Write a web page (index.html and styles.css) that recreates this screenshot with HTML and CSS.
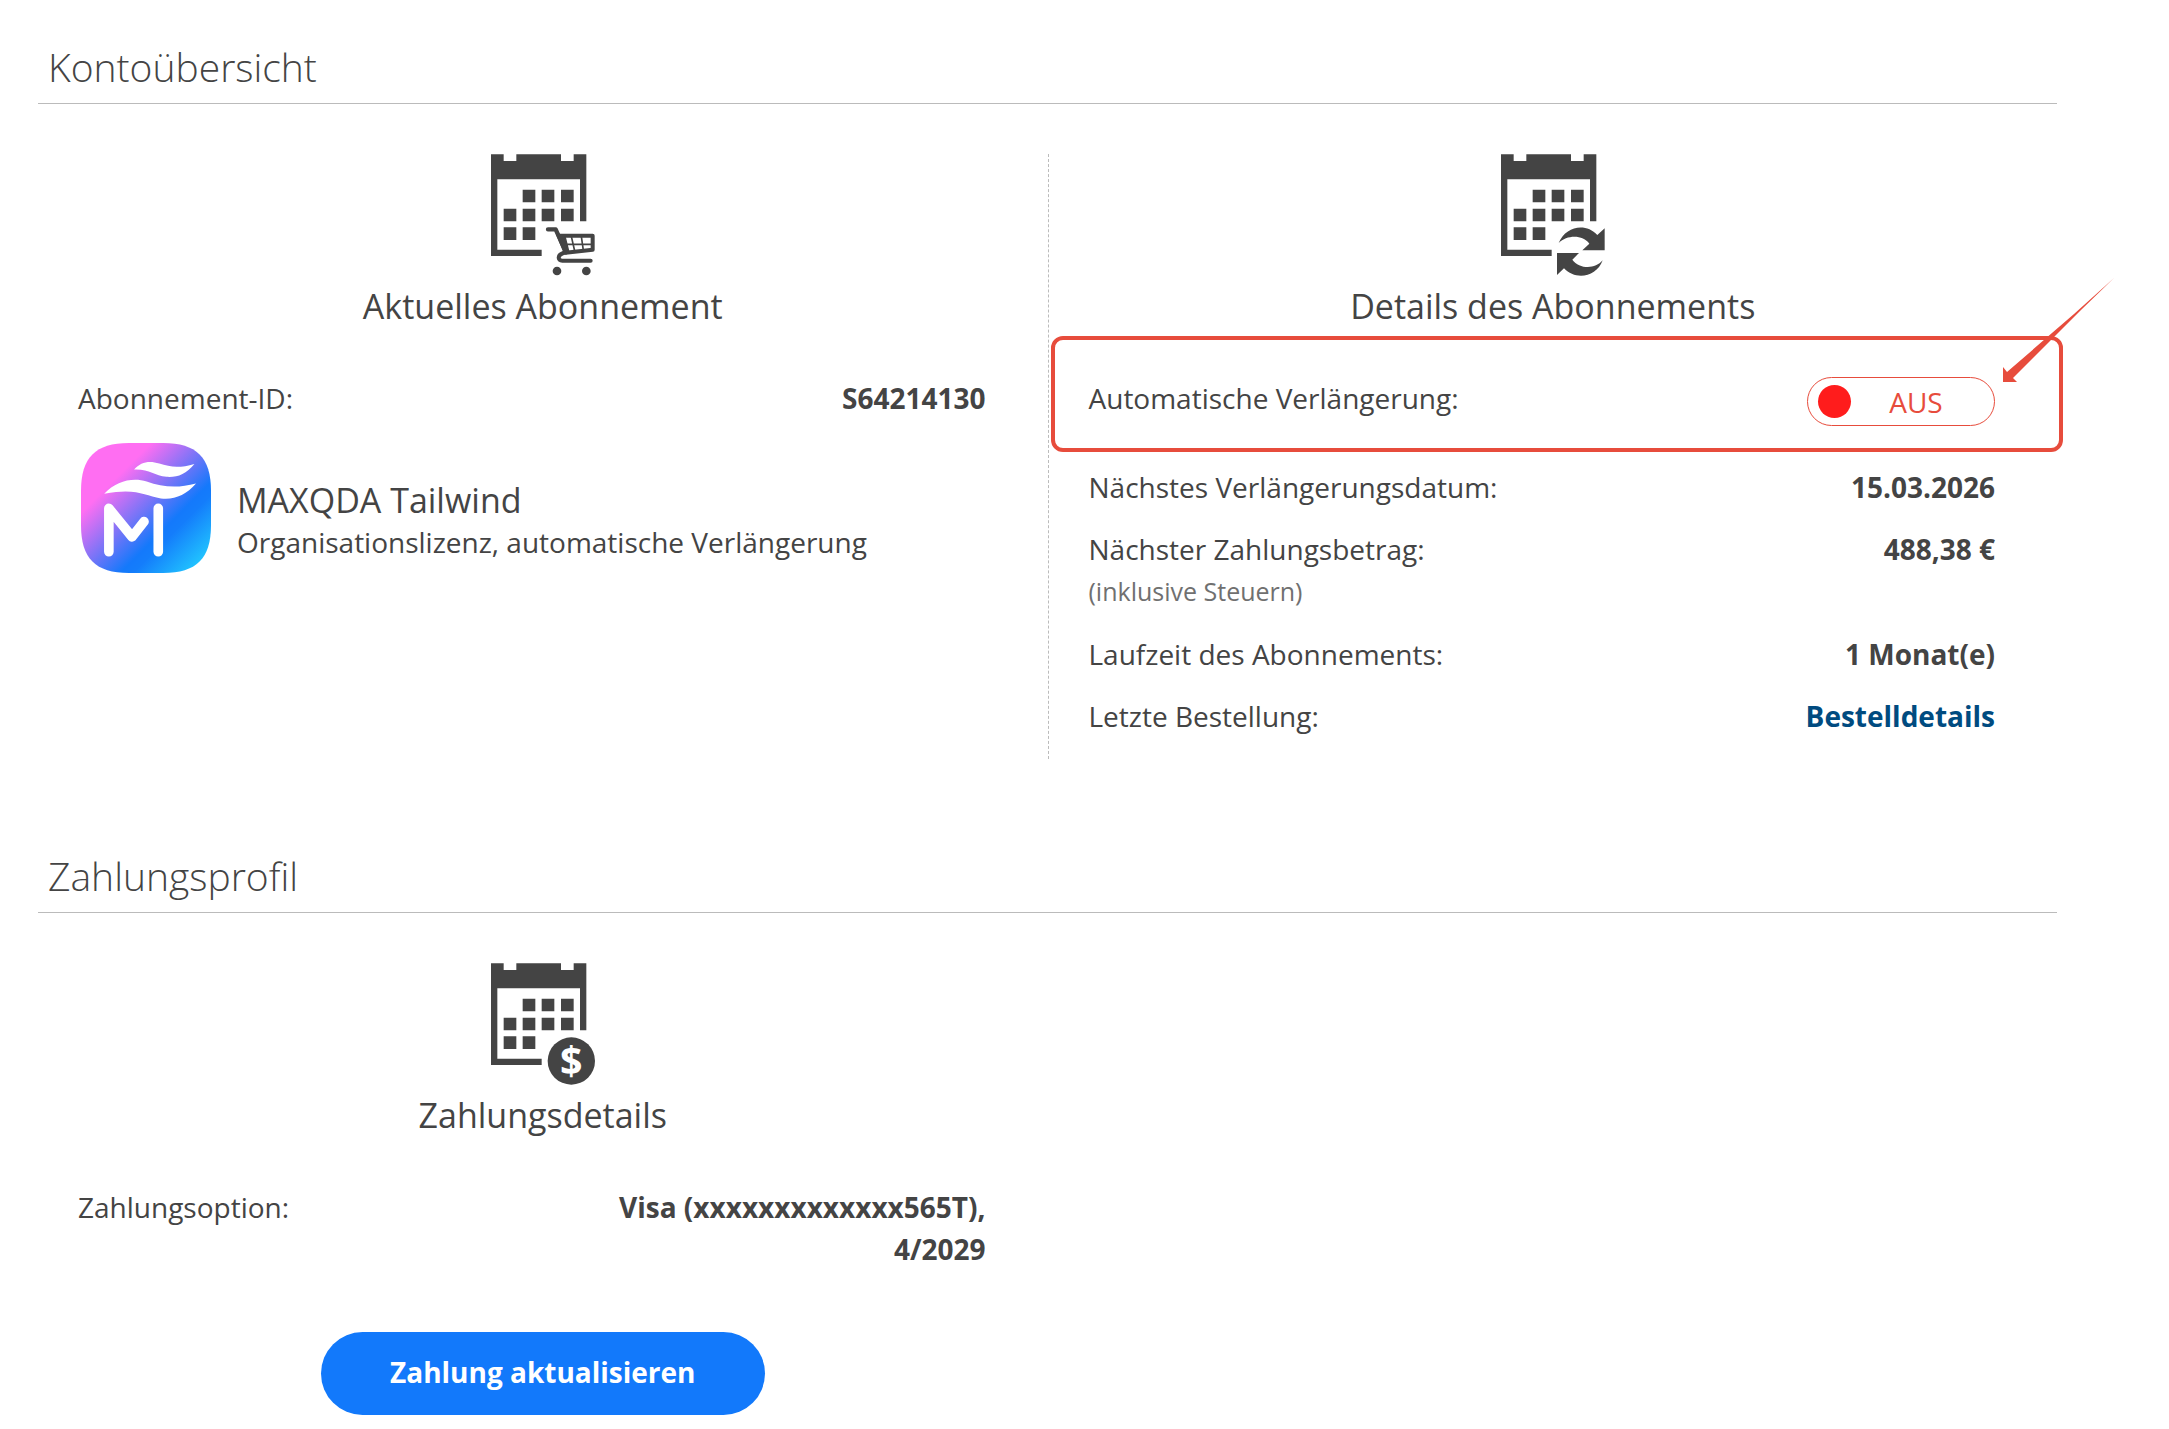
FILE: index.html
```html
<!DOCTYPE html>
<html lang="de">
<head>
    <meta charset="UTF-8">
    <meta name="viewport" content="width=device-width, initial-scale=1.0">
    <title>Kontoübersicht</title>
    <link rel="stylesheet" href="styles.css">
</head>
<body>
    <svg class="sprite" aria-hidden="true">
        <symbol id="calendar" viewBox="63 41 312 366">
            <path d="M63 42H101V62H139V42H273V62H311V42H349V243H330V117H82V328H215V347H63Z"/>
            <path d="M158 148h38v38h-38zM215 148h38v38h-38zM273 148h38v38h-38zM101 205h38v38h-38zM158 205h38v38h-38zM215 205h38v38h-38zM273 205h38v38h-38zM101 261h38v38h-38zM158 261h38v38h-38z"/>
        </symbol>
    </svg>

    <section class="section">
        <h1 class="section-title">Kontoübersicht</h1>
        <div class="columns">
            <div class="column">
                <svg class="icon" viewBox="63 41 312 366" aria-hidden="true">
                    <use href="#calendar" x="63" y="41" width="312" height="366"/>
                    <path d="M234 267H257L288 336" fill="none" stroke="#444" stroke-width="13" stroke-linecap="round" stroke-linejoin="round"/>
                    <path d="M268 286H368V328L280 338C262 344 262 361 277 361H362" fill="none" stroke="#444" stroke-width="12" stroke-linecap="round" stroke-linejoin="round"/>
                    <path d="M262 286H284L296 334H282ZM304 288L314 332M334 288L340 330M276 312H366" stroke="#444" stroke-width="5"/>
                    <circle cx="261" cy="392" r="13"/>
                    <circle cx="349" cy="392" r="13"/>
                </svg>
                <h2 class="column-title">Aktuelles Abonnement</h2>
                <div class="rows">
                    <div class="row">
                        <span>Abonnement-ID:</span>
                        <strong>S64214130</strong>
                    </div>
                    <div class="product">
                        <svg class="product-logo" viewBox="34 36 392 392" aria-hidden="true">
                            <defs>
                                <linearGradient id="logo-bg" x1="0" y1="0" x2="1" y2="1">
                                    <stop offset="0.27" stop-color="#ff6ef2"/>
                                    <stop offset="0.65" stop-color="#1479fb"/>
                                    <stop offset="0.7" stop-color="#147dfb"/>
                                    <stop offset="0.94" stop-color="#22cbff"/>
                                </linearGradient>
                            </defs>
                            <path d="M34 180C34 80 78 36 178 36H282C382 36 426 80 426 180V284C426 384 382 428 282 428H178C78 428 34 384 34 284Z" fill="url(#logo-bg)"/>
                            <path d="M194 116C214 93 240 88 270 98C305 110 335 111 376 99C350 130 325 140 292 138C255 134 240 114 194 116Z" fill="#fff"/>
                            <path d="M104 189C140 150 190 139 232 152C280 169 325 173 381 158C350 193 315 208 275 203C225 194 200 170 104 189Z" fill="#fff"/>
                            <path d="M118 364V233L188 319L224 273M267 233V364" fill="none" stroke="#fff" stroke-width="29" stroke-linecap="round" stroke-linejoin="round"/>
                        </svg>
                        <div class="product-text">
                            <h3 class="product-name">MAXQDA Tailwind</h3>
                            <p>Organisationslizenz, automatische Verlängerung</p>
                        </div>
                    </div>
                </div>
            </div>

            <div class="column divided">
                <svg class="icon" viewBox="63 41 312 366" aria-hidden="true">
                    <use href="#calendar" x="63" y="41" width="312" height="366"/>
                    <path d="M236 308C258 256 318 247 352 284L374 264V330H307L328 310C310 284 262 282 236 308Z"/>
                    <path d="M231 338H297L277 358C298 386 345 388 368 360C350 411 286 421 252 384L231 404Z"/>
                </svg>
                <h2 class="column-title">Details des Abonnements</h2>
                <div class="rows">
                    <div class="row renewal">
                        <span id="renewal-label">Automatische Verlängerung:</span>
                        <label class="toggle">
                            <input type="checkbox" role="switch" aria-labelledby="renewal-label">
                            <span>AUS</span>
                        </label>
                        <div class="highlight">
                            <svg class="arrow" viewBox="0 0 114 106" aria-hidden="true">
                                <path d="M112 0L80 31L11 100L15 104L1 104V89L5 94L72 36Z"/>
                            </svg>
                        </div>
                    </div>
                    <div class="row">
                        <span>Nächstes Verlängerungsdatum:</span>
                        <strong>15.03.2026</strong>
                    </div>
                    <div class="row">
                        <span>Nächster Zahlungsbetrag:<small>(inklusive Steuern)</small></span>
                        <strong>488,38 €</strong>
                    </div>
                    <div class="row">
                        <span>Laufzeit des Abonnements:</span>
                        <strong>1 Monat(e)</strong>
                    </div>
                    <div class="row">
                        <span>Letzte Bestellung:</span>
                        <a href="#">Bestelldetails</a>
                    </div>
                </div>
            </div>
        </div>
    </section>

    <section class="section">
        <h1 class="section-title">Zahlungsprofil</h1>
        <div class="columns">
            <div class="column">
                <svg class="icon" viewBox="63 41 312 366" aria-hidden="true">
                    <use href="#calendar" x="63" y="41" width="312" height="366"/>
                    <circle cx="304" cy="335" r="71"/>
                    <text class="dollar" x="304" y="376">$</text>
                </svg>
                <h2 class="column-title">Zahlungsdetails</h2>
                <div class="rows">
                    <div class="row">
                        <span>Zahlungsoption:</span>
                        <strong>Visa (xxxxxxxxxxxxx565T), 4/2029</strong>
                    </div>
                </div>
                <button class="update-button" type="button">Zahlung aktualisieren</button>
            </div>
        </div>
    </section>
</body>
</html>
```
FILE: styles.css
```css
* {
    box-sizing: border-box;
}
body {
    margin: 0;
    padding: 40px 112px 12px 38px;
    background: #fff;
    color: #444;
    font-family: "Open Sans", Arial, sans-serif;
    font-size: 28px;
    line-height: 42px;
}
h1, h2, h3, p {
    margin: 0;
    font-weight: 400;
}
.sprite {
    position: absolute;
    width: 0;
    height: 0;
}
.section + .section {
    margin-top: 90px;
}
.section-title {
    padding: 0 10px 9px;
    border-bottom: 1px solid #bbb;
    font-size: 39px;
    font-weight: 300;
    line-height: 54px;
}
.columns {
    display: grid;
    grid-template-columns: 1fr 1fr;
    margin-top: 50px;
}
.column {
    display: flex;
    flex-direction: column;
    align-items: center;
}
.divided {
    padding-bottom: 22px;
    border-left: 1px dashed #bbb;
}
.icon {
    width: 104px;
    height: 122px;
    overflow: visible;
    fill: #444;
}
.dollar {
    fill: #fff;
    font-size: 118px;
    font-weight: 700;
    text-anchor: middle;
}
.column-title {
    margin-top: 7px;
    font-size: 34px;
    line-height: 46px;
}
.rows {
    display: flex;
    flex-direction: column;
    gap: 20px;
    align-self: stretch;
    margin-top: 48px;
    padding: 0 62px 0 40px;
}
.row {
    display: flex;
    justify-content: space-between;
    align-items: flex-start;
}
.row strong {
    max-width: 50%;
    text-align: right;
}
.row small {
    display: block;
    color: #707070;
    font-size: 25px;
    line-height: 43px;
}
.row a {
    color: #004b80;
    font-weight: 700;
    text-decoration: none;
}
.renewal {
    position: relative;
    min-height: 69px;
}
.toggle {
    display: flex;
    align-items: center;
    width: 188px;
    height: 49px;
    padding: 0 13px 0 10px;
    border: 1px solid #e74c3c;
    border-radius: 25px;
    color: #e74c3c;
    text-align: center;
    cursor: pointer;
}
.toggle input {
    appearance: none;
    width: 33px;
    height: 33px;
    margin: 0;
    border-radius: 50%;
    background: #ff1c1c;
    cursor: pointer;
}
.toggle span {
    flex: 1;
}
.highlight {
    position: absolute;
    top: -41px;
    right: -68px;
    bottom: -6px;
    left: -38px;
    border: 4px solid #e74c3c;
    border-radius: 12px;
    pointer-events: none;
}
.arrow {
    position: absolute;
    top: -62px;
    right: -57px;
    width: 114px;
    height: 106px;
    fill: #e74c3c;
}
.product {
    display: flex;
    gap: 26px;
    padding: 4px 0 0 3px;
}
.product-logo {
    flex: none;
    width: 130px;
    height: 130px;
}
.product-text {
    padding-top: 36px;
}
.product-name {
    font-size: 34px;
    line-height: 42px;
}
.update-button {
    width: 444px;
    height: 83px;
    margin-top: 62px;
    padding-bottom: 4px;
    border: 0;
    border-radius: 42px;
    background: #1279fb;
    color: #fff;
    font: inherit;
    font-weight: 700;
    cursor: pointer;
}
.update-button:hover {
    background: #0a65d8;
}
```
